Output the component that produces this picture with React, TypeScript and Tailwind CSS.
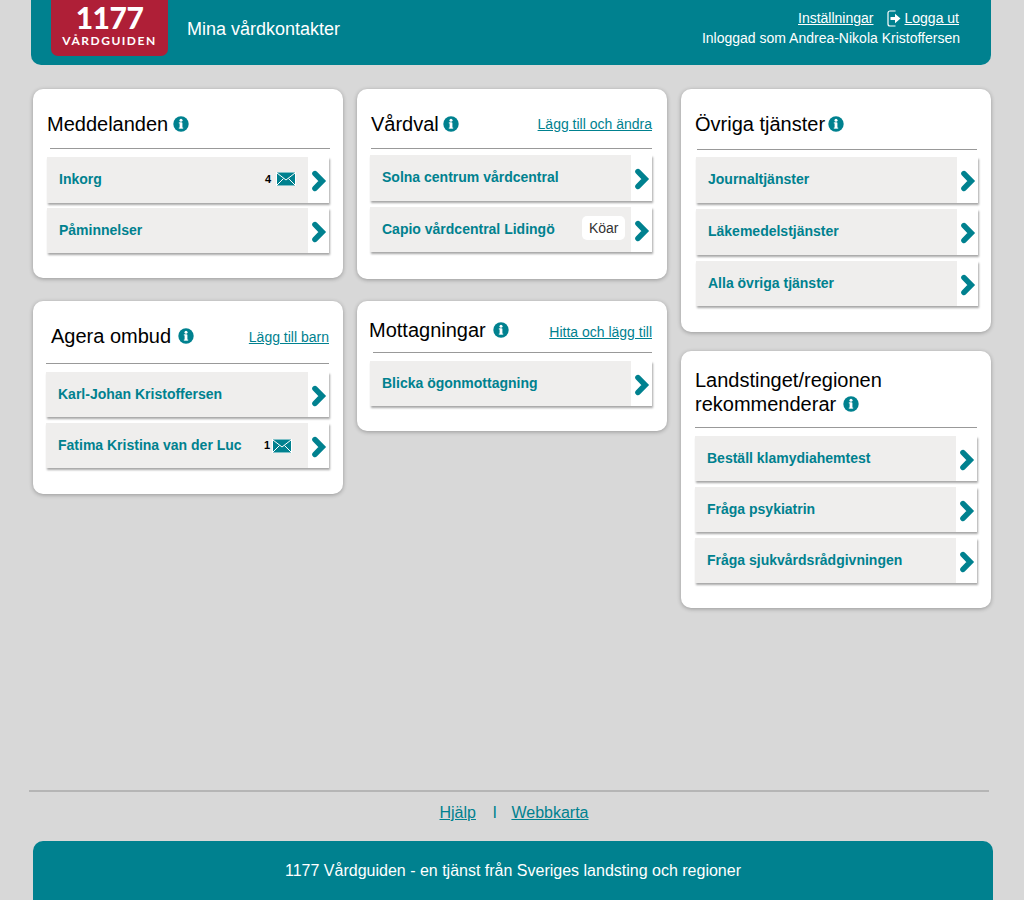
import React from "react";

function Info({ className = "" }: { className?: string }) {
  return (
    <svg width="16" height="16" viewBox="0 0 16 16" className={"shrink-0 " + className}>
      <circle cx="8" cy="8" r="7.7" fill="#00818f" />
      <rect x="6.6" y="6.6" width="2.8" height="5.6" fill="#fff" />
      <rect x="5.8" y="6.4" width="3" height="1" fill="#fff" />
      <rect x="5.8" y="11.6" width="4.4" height="1" fill="#fff" />
      <circle cx="8" cy="4.3" r="1.5" fill="#fff" />
    </svg>
  );
}

function Chevron() {
  return (
    <svg width="16" height="22" viewBox="0 0 16 22" className="mt-[2px]">
      <path d="M4 3.6 L11.2 11 L4 18.4" fill="none" stroke="#00818f" strokeWidth="5.6" strokeLinecap="round" strokeLinejoin="miter" />
    </svg>
  );
}

function Mail({ n, className }: { n: number; className: string }) {
  return (
    <span className={"flex items-center text-[11px] font-bold text-black " + className}>
      {n}
      <svg width="20" height="14" viewBox="0 0 20 14">
        <rect width="20" height="14" fill="#fff" />
        <rect x="1" y="0.5" width="18" height="13" fill="#00818f" />
        <path d="M1 1 L10 8 L19 1 M1 13 L7.5 6.5 M19 13 L12.5 6.5" fill="none" stroke="#fff" strokeWidth="1" />
      </svg>
    </span>
  );
}

function Row({ label, extra, tall }: { label: string; extra?: React.ReactNode; tall?: boolean }) {
  return (
    <div className={"flex bg-white shadow-[1px_2px_2px_rgba(0,0,0,0.35)] " + (tall ? "h-[46px]" : "h-[45px]")}>
      <div className={"flex flex-1 items-center justify-between bg-[#efeeed] pl-3 pr-[12px] " + (tall ? "pb-[2px]" : "")}>
        <span className="text-[14px] font-bold text-[#00818f]">{label}</span>
        {extra}
      </div>
      <div className="flex w-[21px] items-center justify-center">
        <Chevron />
      </div>
    </div>
  );
}

function Card({ className, children }: { className: string; children: React.ReactNode }) {
  return <section className={"rounded-[10px] bg-white shadow-[0_1px_4px_rgba(0,0,0,0.3)] " + className}>{children}</section>;
}

function Title({ children }: { children: React.ReactNode }) {
  return <h2 className="text-[20px] leading-[24px] font-normal text-black">{children}</h2>;
}

function CardLink({ children, className = "" }: { children: React.ReactNode; className?: string }) {
  return <a className={"text-[14px] leading-[18px] text-[#00818f] underline " + className}>{children}</a>;
}

export default function App() {
  return (
    <div className="flex h-[900px] w-[1024px] flex-col overflow-hidden bg-[#d8d8d8] font-['Liberation_Sans',Arial,sans-serif]">
      <header className="mx-[31px] flex h-[65px] w-[960px] shrink-0 justify-between rounded-b-[10px] bg-[#00818f] pl-5 pr-[31px] text-white">
        <div className="flex items-start">
          <div className="flex h-[56px] w-[117px] flex-col items-center rounded-b-[7px] bg-[#af1f37] pt-[1px]">
            <span className="font-['Lato',sans-serif] text-[30px] leading-[32px] font-black tracking-[-0.5px]">1177</span>
            <span className="mt-[1px] font-['Lato',sans-serif] text-[12px] leading-[14px] font-bold tracking-[1.5px]">VÅRDGUIDEN</span>
          </div>
          <span className="ml-[19px] mt-[19px] text-[18px] leading-[21px]">Mina vårdkontakter</span>
        </div>
        <div className="flex flex-col items-end pt-[8px] text-[14px] leading-[20px]">
          <div className="mr-px flex items-center">
            <a className="underline">Inställningar</a>
            <svg width="15" height="17" viewBox="0 0 15 17" className="ml-[13px] mr-[3px]">
              <path d="M8.5 1H3C1.9 1 1 1.9 1 3V14C1 15.1 1.9 16 3 16H8.5" fill="none" stroke="#fff" strokeWidth="1.2" />
              <path d="M3.5 7H8V3.8L13.5 8.5L8 13.2V10H3.5Z" fill="#fff" />
            </svg>
            <a className="underline">Logga ut</a>
          </div>
          <div>Inloggad som Andrea-Nikola Kristoffersen</div>
        </div>
      </header>

      <main className="ml-[33px] mt-[24px] flex gap-[14px]">
        <div className="flex w-[310px] flex-col gap-[23px]">
          <Card className="pl-[14px] pr-[14px] pb-[25px] pt-[23px]">
            <div className="flex items-center gap-[5px]">
              <Title>Meddelanden</Title>
              <Info />
            </div>
            <div className="-mr-px ml-[3px] mt-[12px] h-px bg-[#999]" />
            <div className="mt-[8px] flex flex-col gap-[5px]">
              <Row label="Inkorg" tall extra={<Mail n={4} className="gap-[5px]" />} />
              <Row label="Påminnelser" />
            </div>
          </Card>
          <Card className="pl-[13px] pr-[14px] pb-[26px] pt-[23px]">
            <div className="flex items-center justify-between pl-[5px]">
              <div className="flex items-center gap-[7px]">
                <Title>Agera ombud</Title>
                <Info />
              </div>
              <CardLink className="mt-[2px]">Lägg till barn</CardLink>
            </div>
            <div className="mt-[15px] h-px bg-[#999]" />
            <div className="mt-[8px] flex flex-col gap-[6px]">
              <Row label="Karl-Johan Kristoffersen" />
              <Row label="Fatima Kristina van der Luc" extra={<Mail n={1} className="mr-[4px] gap-[2px]" />} />
            </div>
          </Card>
        </div>

        <div className="flex w-[310px] flex-col gap-[22px]">
          <Card className="pl-[13px] pr-[15px] pb-[27px] pt-[23px]">
            <div className="flex items-center justify-between pl-px">
              <div className="flex items-center gap-[4px]">
                <Title>Vårdval</Title>
                <Info />
              </div>
              <CardLink>Lägg till och ändra</CardLink>
            </div>
            <div className="ml-px mt-[12px] h-px bg-[#999]" />
            <div className="mt-[6px] flex flex-col gap-[6px]">
              <Row label="Solna centrum vårdcentral" tall />
              <Row
                label="Capio vårdcentral Lidingö"
                extra={<span className="mb-[4px] mr-[-6px] rounded-[5px] bg-white px-[6.5px] py-[2px] text-[14px] leading-[20px] text-[#333]">Köar</span>}
              />
            </div>
          </Card>
          <Card className="pl-[13px] pr-[15px] pb-[25px] pt-[17px]">
            <div className="flex items-center justify-between">
              <div className="ml-[-1px] flex items-center gap-[7px]">
                <Title>Mottagningar</Title>
                <Info />
              </div>
              <CardLink className="mt-[3px]">Hitta och lägg till</CardLink>
            </div>
            <div className="ml-[3px] mt-[10px] h-px bg-[#999]" />
            <div className="mt-[8px]">
              <Row label="Blicka ögonmottagning" />
            </div>
          </Card>
        </div>

        <div className="flex w-[310px] flex-col gap-[19px]">
          <Card className="pl-[15px] pr-[13px] pb-[26px] pt-[23px]">
            <div className="-ml-px flex items-center gap-[3px]">
              <Title>Övriga tjänster</Title>
              <Info />
            </div>
            <div className="ml-px mr-px mt-[13px] h-px bg-[#999]" />
            <div className="mt-[7px] flex flex-col gap-[6px]">
              <Row label="Journaltjänster" tall />
              <Row label="Läkemedelstjänster" tall />
              <Row label="Alla övriga tjänster" />
            </div>
          </Card>
          <Card className="pl-[14px] pr-[14px] pb-[25px] pt-[17px]">
            <Title>
              Landstinget/regionen
              <br />
              <span className="inline-flex items-center gap-[7px]">
                rekommenderar <Info />
              </span>
            </Title>
            <div className="mt-[11px] h-px bg-[#999]" />
            <div className="mt-[8px] flex flex-col gap-[6px]">
              <Row label="Beställ klamydiahemtest" />
              <Row label="Fråga psykiatrin" />
              <Row label="Fråga sjukvårdsrådgivningen" />
            </div>
          </Card>
        </div>
      </main>

      <div className="flex-1" />
      <div className="ml-[29px] h-[2px] w-[960px] bg-[#b5b5b5]" />
      <nav className="mt-[11px] flex items-center justify-center pl-[4px] text-[16px] leading-[20px] text-[#00818f]">
        <a className="underline">Hjälp</a>
        <span className="mx-[15.5px] translate-x-[1px]">I</span>
        <a className="underline">Webbkarta</a>
      </nav>
      <footer className="ml-[33px] mt-[18px] flex h-[59px] w-[960px] shrink-0 items-center justify-center rounded-t-[10px] bg-[#00818f] text-[16px] text-white">
        1177 Vårdguiden - en tjänst från Sveriges landsting och regioner
      </footer>
    </div>
  );
}
